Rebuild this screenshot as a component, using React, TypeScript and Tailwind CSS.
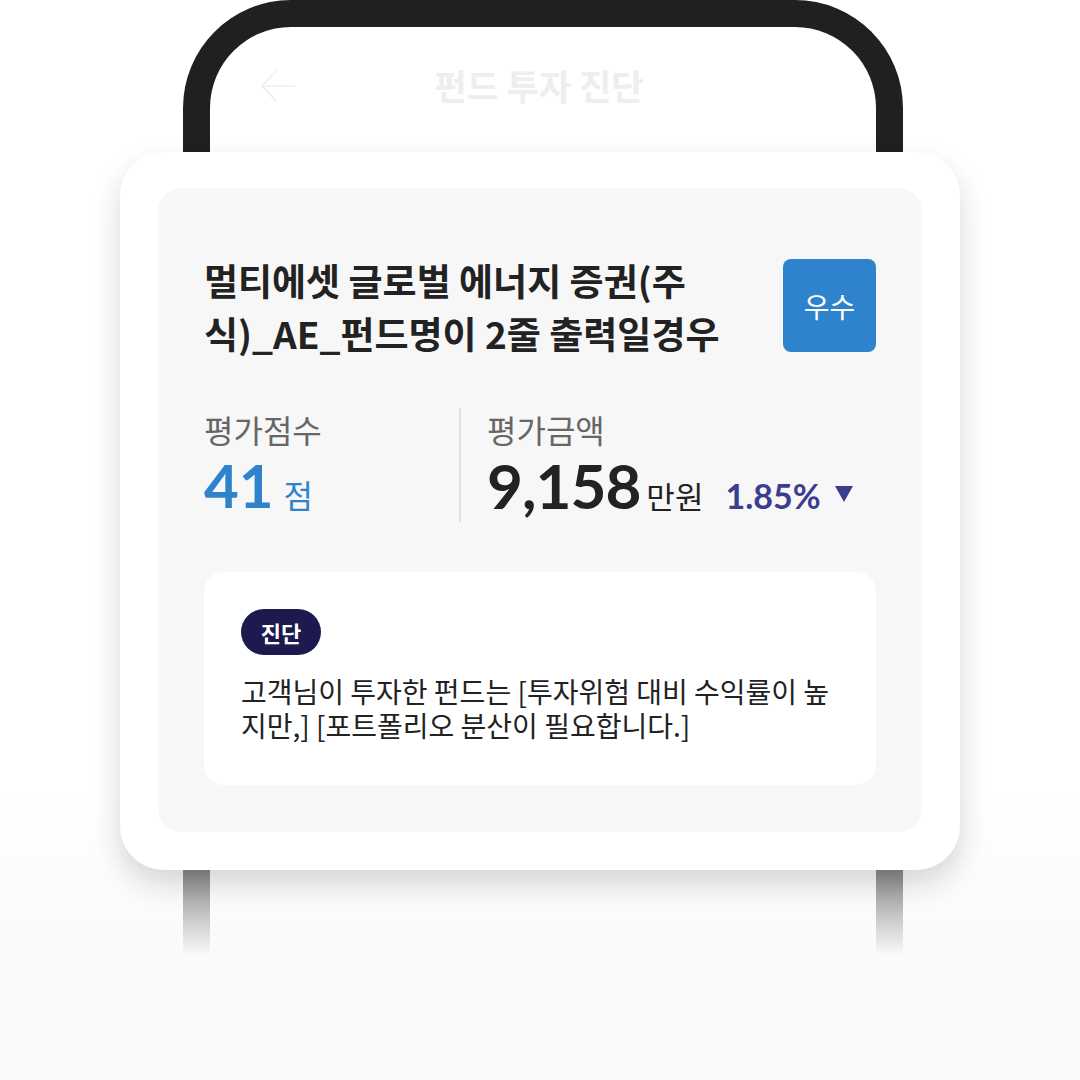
import React from 'react';

const kr = "font-['Noto_Sans_CJK_KR','Noto_Sans',sans-serif]";
const num = "font-['Lato','Noto_Sans_CJK_KR',sans-serif]";

const BackArrow: React.FC = () => (
  <svg width="36" height="34" viewBox="0 0 36 34" fill="none">
    <path d="M35 17H2M16 2L2 17l14 15" stroke="#eeeeee" strokeWidth="1.6" strokeLinecap="round" strokeLinejoin="round" />
  </svg>
);

const FundCard: React.FC = () => (
  <div className="absolute left-[120px] top-[152px] w-[840px] rounded-[44px] bg-white px-[38px] pt-[36px] pb-[38px] shadow-[0_14px_30px_rgba(0,0,0,0.16)]">
    <div className="rounded-[24px] bg-[#f7f7f7] px-[46px] pt-[66px] pb-[47px]">
      <div className="flex items-start justify-between">
        <h2 className={`${kr} text-[37px] leading-[53px] font-bold text-[#222] whitespace-nowrap`}>
          멀티에셋 글로벌 에너지 증권(주
          <br />
          식)_AE_펀드명이 2줄 출력일경우
        </h2>
        <div className={`${kr} mt-[5px] flex h-[93px] w-[93px] items-center justify-center rounded-[8px] bg-[#2f83cc] text-[28px] text-white`}>
          우수
        </div>
      </div>

      <div className="mt-[48px] flex h-[114px]">
        <div className="flex w-[255px] flex-col">
          <div className={`${kr} text-[32px] leading-[42px] text-[#666]`}>평가점수</div>
          <div className="mt-[2px] flex items-baseline">
            <span className={`${num} text-[60px] leading-[66px] font-bold text-[#2f83cc]`}>41</span>
            <span className={`${kr} ml-[10px] text-[32px] text-[#2f83cc]`}>점</span>
          </div>
        </div>
        <div className="w-[2px] bg-[#e0e0e0]" />
        <div className="flex flex-col pl-[26px]">
          <div className={`${kr} text-[32px] leading-[42px] text-[#666]`}>평가금액</div>
          <div className="mt-[2px] flex items-baseline">
            <span className={`${num} text-[62px] leading-[66px] font-bold tracking-[-1px] text-[#222]`}>9,158</span>
            <span className={`${kr} ml-[6px] text-[31px] text-[#222]`}>만원</span>
            <span className={`${num} ml-[22px] text-[34px] font-bold text-[#3b3d8f]`}>1.85%</span>
            <svg className="ml-[14px] self-center mt-[14px]" width="18" height="16" viewBox="0 0 18 16">
              <path d="M0 0h18L9 16z" fill="#3b3d8f" />
            </svg>
          </div>
        </div>
      </div>

      <div className="mt-[50px] rounded-[20px] bg-white px-[37px] pt-[37px] pb-[43px]">
        <span className={`${kr} inline-flex h-[46px] w-[80px] items-center justify-center rounded-full bg-[#1c1a4f] text-[22px] font-bold text-white`}>
          진단
        </span>
        <p className={`${kr} mt-[19px] text-[28px] leading-[34px] text-[#222] whitespace-nowrap`}>
          고객님이 투자한 펀드는 [투자위험 대비 수익률이 높
          <br />
          지만,] [포트폴리오 분산이 필요합니다.]
        </p>
      </div>
    </div>
  </div>
);

const App: React.FC = () => {
  return (
    <div className="relative h-[1080px] w-[1080px] overflow-hidden bg-white">
      <div className="absolute left-[183px] top-0 h-[960px] w-[720px] rounded-t-[108px] border-[27px] border-b-0 border-[#202020] bg-white">
        <div className="relative flex h-[116px] items-center justify-center">
          <div className="absolute left-[50px] top-[42px]">
            <BackArrow />
          </div>
          <h1 className={`${kr} -ml-[8px] text-[35px] font-bold text-[#eeeeee]`}>펀드 투자 진단</h1>
        </div>
      </div>
      <div className="absolute left-0 top-[790px] h-[290px] w-full bg-[linear-gradient(to_bottom,rgba(250,250,250,0)_0px,#fafafa_165px)]" />
      <FundCard />
    </div>
  );
};

export default App;
